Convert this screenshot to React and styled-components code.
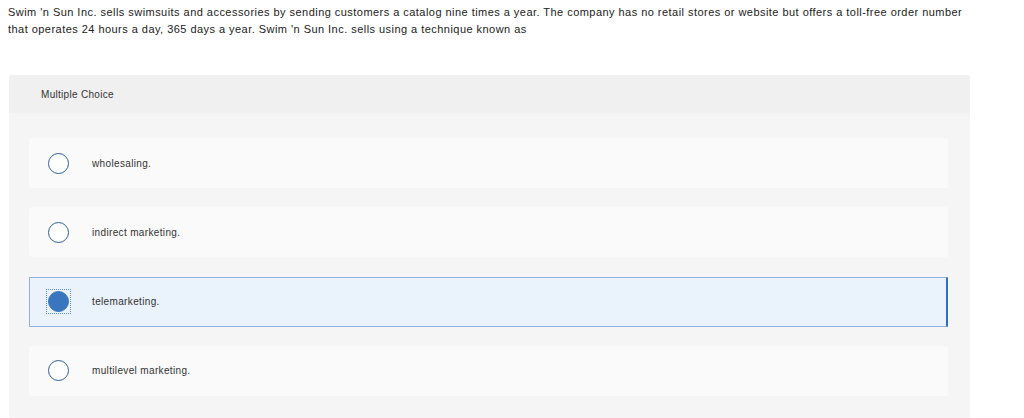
import React from "react";
import styled, { createGlobalStyle } from "styled-components";

const Global = createGlobalStyle`
  html, body { margin: 0; padding: 0; background: #fff; }
  body { font-family: "Liberation Sans", Arial, sans-serif; color: #222; }
`;

const Page = styled.div`
  padding: 4px 0 0 8px;
`;

const Prompt = styled.p`
  margin: 0;
  max-width: 964px;
  font-size: 11px;
  letter-spacing: 0.46px;
  line-height: 17px;
  color: #222;
`;

const Panel = styled.section`
  margin-top: 37px;
  margin-left: 1px;
  width: 961px;
  border-radius: 3px 3px 0 0;
  overflow: hidden;
  background: #f5f5f5;
`;

const Header = styled.div`
  height: 38px;
  display: flex;
  align-items: center;
  padding-left: 32px;
  background: #f0f0f0;
  font-size: 10px;
  letter-spacing: 0.3px;
  color: #333;
`;

const List = styled.div`
  display: flex;
  flex-direction: column;
  gap: 19.3px;
  padding: 25px 22px 30px 20px;
`;

const Option = styled.label`
  box-sizing: border-box;
  height: 50px;
  display: flex;
  align-items: center;
  padding-left: ${(p) => (p.$selected ? "18px" : "19px")};
  border-radius: ${(p) => (p.$selected ? "1px" : "3px")};
  background: ${(p) => (p.$selected ? "#eaf2fb" : "#fafafa")};
  border: ${(p) => (p.$selected ? "1px solid #8cb1df" : "none")};
  border-right: ${(p) => (p.$selected ? "2px solid #2f6fc2" : "none")};
  cursor: pointer;
`;

const RadioWrap = styled.span`
  width: 25px;
  height: 25px;
  margin-left: -2px;
  display: flex;
  align-items: center;
  justify-content: center;
  box-sizing: border-box;
  border: 1px dotted ${(p) => (p.$focus ? "#5b8fd0" : "transparent")};
`;

const Radio = styled.span`
  width: 21px;
  height: 21px;
  border-radius: 50%;
  box-sizing: border-box;
  border: 1px solid #2d5f96;
  background: ${(p) => (p.$checked ? "#3a76bf" : "#fff")};
  ${(p) => p.$checked && "border-color: #3a76bf;"}
`;

const Label = styled.span`
  margin-left: 21px;
  font-size: 10px;
  letter-spacing: 0.35px;
  color: #333;
`;

const options = [
  "wholesaling.",
  "indirect marketing.",
  "telemarketing.",
  "multilevel marketing.",
];

export default function App() {
  const selected = 2;
  return (
    <>
      <Global />
      <Page>
        <Prompt>
          Swim 'n Sun Inc. sells swimsuits and accessories by sending customers a catalog nine times a year. The company has no retail stores or website but offers a toll-free order number that operates 24 hours a day, 365 days a year. Swim 'n Sun Inc. sells using a technique known as
        </Prompt>
        <Panel>
          <Header>Multiple Choice</Header>
          <List>
            {options.map((o, i) => (
              <Option key={o} $selected={i === selected}>
                <RadioWrap $focus={i === selected}>
                  <Radio $checked={i === selected} />
                </RadioWrap>
                <Label>{o}</Label>
              </Option>
            ))}
          </List>
        </Panel>
      </Page>
    </>
  );
}
